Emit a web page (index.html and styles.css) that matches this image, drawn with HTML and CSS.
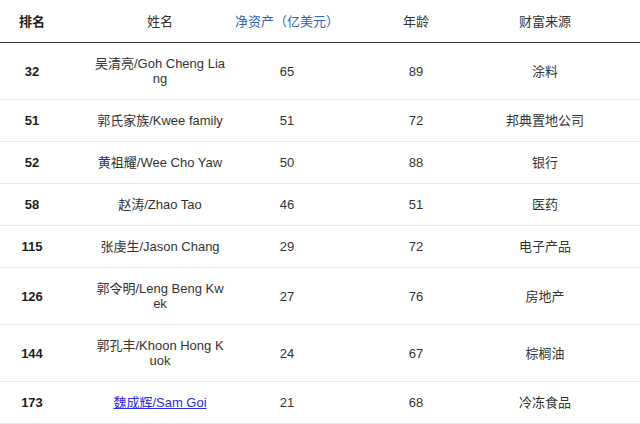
FILE: index.html
```html
<!DOCTYPE html>
<html lang="zh-CN">
<head>
<meta charset="utf-8">
<title>富豪榜</title>
<link rel="stylesheet" href="styles.css">
</head>
<body>
<table class="rich">
  <colgroup>
    <col class="c-rank">
    <col class="c-name">
    <col class="c-worth">
    <col class="c-age">
    <col class="c-src">
  </colgroup>
  <thead>
    <tr>
      <th class="rank">排名</th>
      <th>姓名</th>
      <th class="hl">净资产（亿美元）</th>
      <th>年龄</th>
      <th class="src">财富来源</th>
    </tr>
  </thead>
  <tbody>
    <tr><td class="rank">32</td><td class="name">吴清亮/Goh Cheng Liang</td><td>65</td><td>89</td><td class="src">涂料</td></tr>
    <tr><td class="rank">51</td><td class="name">郭氏家族/Kwee family</td><td>51</td><td>72</td><td class="src">邦典置地公司</td></tr>
    <tr><td class="rank">52</td><td class="name">黄祖耀/Wee Cho Yaw</td><td>50</td><td>88</td><td class="src">银行</td></tr>
    <tr><td class="rank">58</td><td class="name">赵涛/Zhao Tao</td><td>46</td><td>51</td><td class="src">医药</td></tr>
    <tr><td class="rank">115</td><td class="name">张虔生/Jason Chang</td><td>29</td><td>72</td><td class="src">电子产品</td></tr>
    <tr><td class="rank">126</td><td class="name">郭令明/Leng Beng Kwek</td><td>27</td><td>76</td><td class="src">房地产</td></tr>
    <tr><td class="rank">144</td><td class="name">郭孔丰/Khoon Hong Kuok</td><td>24</td><td>67</td><td class="src">棕榈油</td></tr>
    <tr><td class="rank">173</td><td class="name"><a href="#" class="person">魏成辉/Sam Goi</a></td><td>21</td><td>68</td><td class="src">冷冻食品</td></tr>
  </tbody>
</table>
</body>
</html>
```
FILE: styles.css
```css
html, body {
  margin: 0;
  padding: 0;
  background: #ffffff;
}

body {
  font-family: "Liberation Sans", Arial, "Noto Sans CJK SC", sans-serif;
  font-size: 13px;
  line-height: 15px;
  color: #333333;
}

.rich {
  width: 640px;
  table-layout: fixed;
  border-collapse: collapse;
  border-spacing: 0;
}

.c-rank { width: 93px; }
.c-name { width: 134px; }
.c-worth { width: 120px; }
.c-age { width: 138px; }
.c-src { width: 155px; }

.rich th,
.rich td {
  padding: 13px 0;
  text-align: center;
  vertical-align: middle;
  border-bottom: 1px solid #e6e6e6;
  word-break: break-all;
}

.rich th {
  font-weight: normal;
  padding-top: 14px;
  padding-bottom: 13px;
  border-bottom: 1px solid #3a3a3a;
  white-space: nowrap;
}

.rich .rank {
  padding-right: 29px;
  font-weight: bold;
  color: #1e1e1e;
}

.rich .src {
  padding-right: 35px;
}

.rich th.hl {
  color: #3264b4;
}

.person {
  color: #2a2ae6;
  text-decoration: underline;
}
```
